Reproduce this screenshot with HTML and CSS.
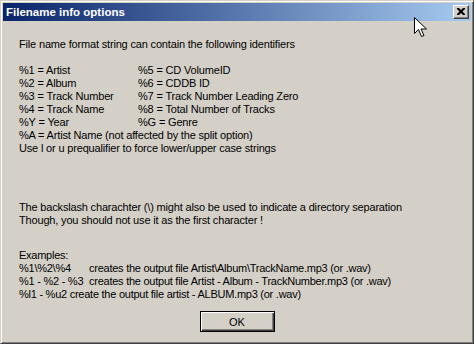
FILE: index.html
```html
<!DOCTYPE html>
<html lang="en">

<head>
  <meta charset="UTF-8">
  <title>Filename info options</title>
  <link rel="stylesheet" href="styles.css">
</head>

<body>
  <div class="window">
    <div class="title-bar">
      <span class="title">Filename info options</span>
      <button class="close-btn" aria-label="Close">
        <svg width="8" height="7" viewBox="0 0 8 7">
          <path d="M0 0h2l2 2 2-2h2v1l-2.5 2.5 2.5 2.5v1h-2l-2-2-2 2h-2v-1l2.5-2.5-2.5-2.5z" fill="#000" />
        </svg>
      </button>
    </div>

    <div class="content">
      <p>File name format string can contain the following identifiers</p>

      <div class="ids">
        <span>%1 = Artist</span><span>%5 = CD VolumeID</span>
        <span>%2 = Album</span><span>%6 = CDDB ID</span>
        <span>%3 = Track Number</span><span>%7 = Track Number Leading Zero</span>
        <span>%4 = Track Name</span><span>%8 = Total Number of Tracks</span>
        <span>%Y = Year</span><span>%G = Genre</span>
      </div>
      <p>%A = Artist Name (not affected by the split option)</p>
      <p>Use l or u prequalifier to force lower/upper case strings</p>

      <div class="note">
        <p>The backslash charachter (\) might also be used to indicate a directory separation</p>
        <p>Though, you should not use it as the first character !</p>
      </div>

      <div class="examples">
        <p>Examples:</p>
        <p><span class="fmt">%1\%2\%4</span>creates the output file Artist\Album\TrackName.mp3 (or .wav)</p>
        <p><span class="fmt">%1 - %2 - %3</span>creates the output file Artist - Album - TrackNumber.mp3 (or .wav)</p>
        <p>%l1 - %u2 create the output file artist - ALBUM.mp3 (or .wav)</p>
      </div>

      <div class="actions">
        <button class="ok-btn">OK</button>
      </div>
    </div>

    <!-- mouse pointer in the screenshot -->
    <svg class="cursor" width="13" height="21" viewBox="0 0 13 21">
      <path d="M0.5 0.5v16l4-4 3 7 2.5-1-3-6.5h5.5z" fill="#fff" stroke="#000" stroke-width="1" />
    </svg>
  </div>
</body>

</html>
```

FILE: styles.css
```css
* {
  margin: 0;
  padding: 0;
  box-sizing: border-box;
}

body {
  font-family: 'Liberation Sans', Arial, sans-serif;
  font-size: 11px;
  background-color: #d4d0c8;
}

.window {
  position: relative;
  width: 474px;
  height: 344px;
  background-color: #d4d0c8;
  border: 1px solid;
  border-color: #d4d0c8 #404040 #404040 #d4d0c8;
  box-shadow: inset 1px 1px #fff, inset -1px -1px #808080;
  padding: 2px;
  display: flex;
  flex-direction: column;
}

.title-bar {
  height: 18px;
  background: linear-gradient(to right, #0a246a, #a6caf0);
  display: flex;
  align-items: center;
  justify-content: space-between;
  padding: 0 2px 0 2px;
}

.title {
  color: #fff;
  font-weight: bold;
  font-size: 11.5px;
  padding-left: 1px;
}

.close-btn {
  width: 16px;
  height: 14px;
  background-color: #d4d0c8;
  border: 1px solid;
  border-color: #fff #404040 #404040 #fff;
  box-shadow: inset -1px -1px #808080;
  display: flex;
  align-items: center;
  justify-content: center;
  padding-bottom: 1px;
}

.content {
  flex: 1;
  padding: 17px 0 0 16px;
  color: #000;
  line-height: 13px;
  letter-spacing: -0.17px;
}

.ids {
  margin-top: 13px;
  display: grid;
  grid-template-columns: 119px auto;
}

.note {
  margin-top: 46px;
}

.examples {
  margin-top: 22px;
  letter-spacing: -0.25px;
}

.fmt {
  display: inline-block;
  width: 70px;
}

.actions {
  display: flex;
  justify-content: center;
  margin-top: 10px;
  padding-right: 16px;
}

.ok-btn {
  width: 75px;
  height: 21px;
  font-family: inherit;
  font-size: 11px;
  color: #000;
  background-color: #d4d0c8;
  border: 1px solid #000;
  box-shadow: inset 1px 1px #fff, inset -1px -1px #404040, inset -2px -2px #808080;
}

.cursor {
  position: absolute;
  left: 413px;
  top: 16px;
}
```
